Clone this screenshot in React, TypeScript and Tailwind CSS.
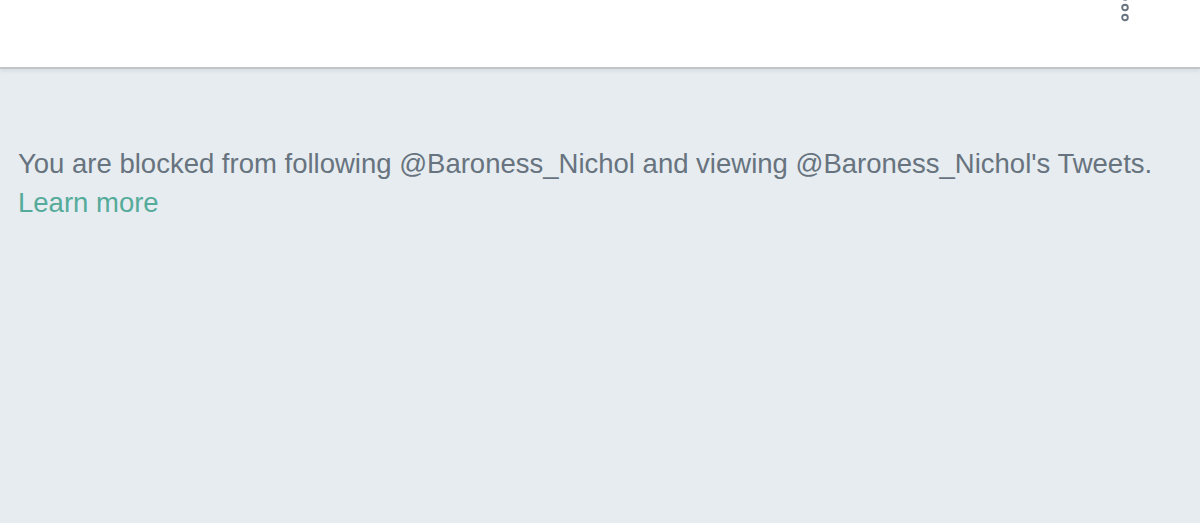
import React from "react";

export default function App() {
  return (
    <div className="w-[1200px] h-[523px] bg-[#e6ecf0] overflow-hidden" style={{ fontFamily: '"Liberation Sans", Arial, sans-serif' }}>
      <div className="relative h-[69px] bg-white border-b-2 border-[#c1c5c9] shadow-[0_2px_4px_rgba(0,0,0,0.07)]">
        <svg className="absolute left-[1118px] top-[-9px]" width="14" height="34" viewBox="0 0 14 34">
          <circle cx="7" cy="6" r="2.8" fill="none" stroke="#67737e" strokeWidth="1.9" />
          <circle cx="7" cy="16.5" r="2.8" fill="none" stroke="#67737e" strokeWidth="1.9" />
          <circle cx="7" cy="26.5" r="2.8" fill="none" stroke="#67737e" strokeWidth="1.9" />
        </svg>
      </div>
      <div className="pl-[18px] pt-[75px] text-[27.5px] leading-[39px] text-[#67737e]">
        <p>You are blocked from following @Baroness_Nichol and viewing @Baroness_Nichol's Tweets.</p>
        <p className="text-[#55ab9a]">Learn more</p>
      </div>
    </div>
  );
}
